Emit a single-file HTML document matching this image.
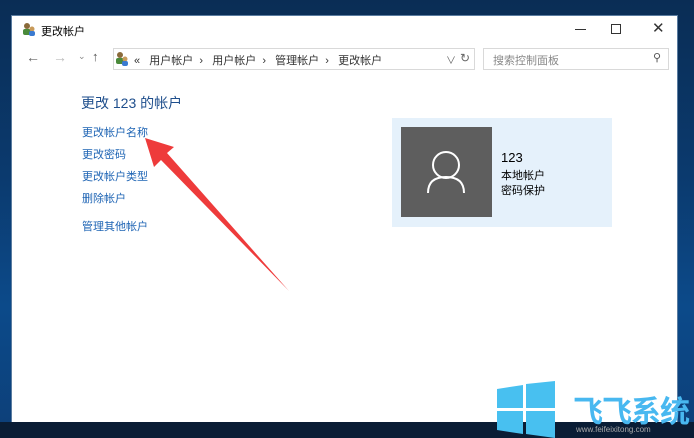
<!DOCTYPE html>
<html><head><meta charset="utf-8"><style>
*{margin:0;padding:0;box-sizing:border-box}
body{width:694px;height:438px;overflow:hidden;position:relative;font-family:"Liberation Sans","Noto Sans CJK SC",sans-serif;background:linear-gradient(180deg,#0a2d55 0%,#0b3a6e 40%,#0c4a8a 70%,#0d3f78 100%)}
.win{position:absolute;left:11px;top:15px;width:667px;height:408px;background:#fff;border:1px solid #5a7ca0}
.t{position:absolute;font-size:11px;color:#000;white-space:nowrap}
.lnk{position:absolute;font-size:11px;color:#1e64b4;white-space:nowrap}
.bar{position:absolute;left:0;top:422px;width:694px;height:16px;background:#0a1d35}
</style></head><body>
<div class="win">
  <svg style="position:absolute;left:10px;top:6px" width="14" height="14"><circle cx="5" cy="4" r="3" fill="#8a6a3a"/><rect x="1" y="7" width="8" height="6" rx="2" fill="#4a8a3a"/><circle cx="10" cy="7" r="2.5" fill="#c89a5a"/><rect x="7" y="9" width="6" height="5" rx="2" fill="#3a7ad0"/></svg>
  <div class="t" style="left:29px;top:7px">更改帐户</div>
  <div style="position:absolute;left:563px;top:13px;width:11px;height:1px;background:#333"></div>
  <div style="position:absolute;left:599px;top:8px;width:10px;height:10px;border:1px solid #333"></div>
  <div class="t" style="left:640px;top:3px;font-size:15px;color:#333">✕</div>
  <div class="t" style="left:14px;top:33px;font-size:14px;color:#666">←</div>
  <div class="t" style="left:41px;top:33px;font-size:14px;color:#bbb">→</div>
  <div class="t" style="left:66px;top:35px;font-size:9px;color:#888">⌄</div>
  <div class="t" style="left:80px;top:33px;font-size:13px;color:#555">↑</div>
  <div style="position:absolute;left:101px;top:32px;width:362px;height:22px;border:1px solid #d9d9d9"></div>
  <svg style="position:absolute;left:103px;top:35px" width="15" height="15"><circle cx="5" cy="4" r="3" fill="#8a6a3a"/><rect x="1" y="7" width="8" height="6" rx="2" fill="#4a8a3a"/><circle cx="10" cy="8" r="2.5" fill="#c89a5a"/><rect x="7" y="10" width="6" height="5" rx="2" fill="#3a7ad0"/></svg>
  <div class="t" style="left:122px;top:36px;color:#333">«&nbsp;&nbsp; 用户帐户 &nbsp;›&nbsp;&nbsp; 用户帐户 &nbsp;›&nbsp;&nbsp; 管理帐户 &nbsp;›&nbsp;&nbsp; 更改帐户</div>
  <div class="t" style="left:434px;top:36px;color:#666;font-size:10px">∨</div>
  <div class="t" style="left:448px;top:35px;color:#666;font-size:12px">↻</div>
  <div style="position:absolute;left:471px;top:32px;width:186px;height:22px;border:1px solid #d9d9d9"></div>
  <div class="t" style="left:481px;top:36px;color:#888">搜索控制面板</div>
  <div class="t" style="left:641px;top:35px;color:#555;font-size:11px">⚲</div>
  <div class="t" style="left:69px;top:77px;font-size:14px;color:#1e4e8c">更改 123 的帐户</div>
  <div class="lnk" style="left:70px;top:108px">更改帐户名称</div>
  <div class="lnk" style="left:70px;top:130px">更改密码</div>
  <div class="lnk" style="left:70px;top:152px">更改帐户类型</div>
  <div class="lnk" style="left:70px;top:174px">删除帐户</div>
  <div class="lnk" style="left:70px;top:202px">管理其他帐户</div>
  <div style="position:absolute;left:380px;top:102px;width:220px;height:109px;background:#e5f1fb"></div>
  <div style="position:absolute;left:389px;top:111px;width:91px;height:90px;background:#5e5e5e"></div>
  <svg style="position:absolute;left:389px;top:111px" width="91" height="90"><circle cx="45" cy="38" r="13" fill="none" stroke="#fff" stroke-width="2"/><path d="M27 66 Q27 50 45 50 Q63 50 63 66" fill="none" stroke="#fff" stroke-width="2"/></svg>
  <div class="t" style="left:489px;top:134px;font-size:13px">123</div>
  <div class="t" style="left:489px;top:151px">本地帐户</div>
  <div class="t" style="left:489px;top:166px">密码保护</div>
</div>
<svg style="position:absolute;left:0;top:0" width="694" height="438"><path d="M145 138 L174 147 L167 153 L289 291 L161 160 L154 167 Z" fill="#ee3b3b"/></svg>
<div class="bar"></div>
<svg style="position:absolute;left:497px;top:381px" width="60" height="57"><path d="M0 8 L26 4 L26 27 L0 27 Z M29 3 L58 0 L58 27 L29 27 Z M0 30 L26 30 L26 53 L0 49 Z M29 30 L58 30 L58 57 L29 53 Z" fill="#48c0f0"/></svg>
<div class="t" style="left:573px;top:387px;font-size:30px;font-weight:bold;color:#48b8f0;letter-spacing:-1px">飞飞系统</div>
<div class="t" style="left:576px;top:425px;font-size:8px;color:#aaa">www.feifeixitong.com</div>
</body></html>
